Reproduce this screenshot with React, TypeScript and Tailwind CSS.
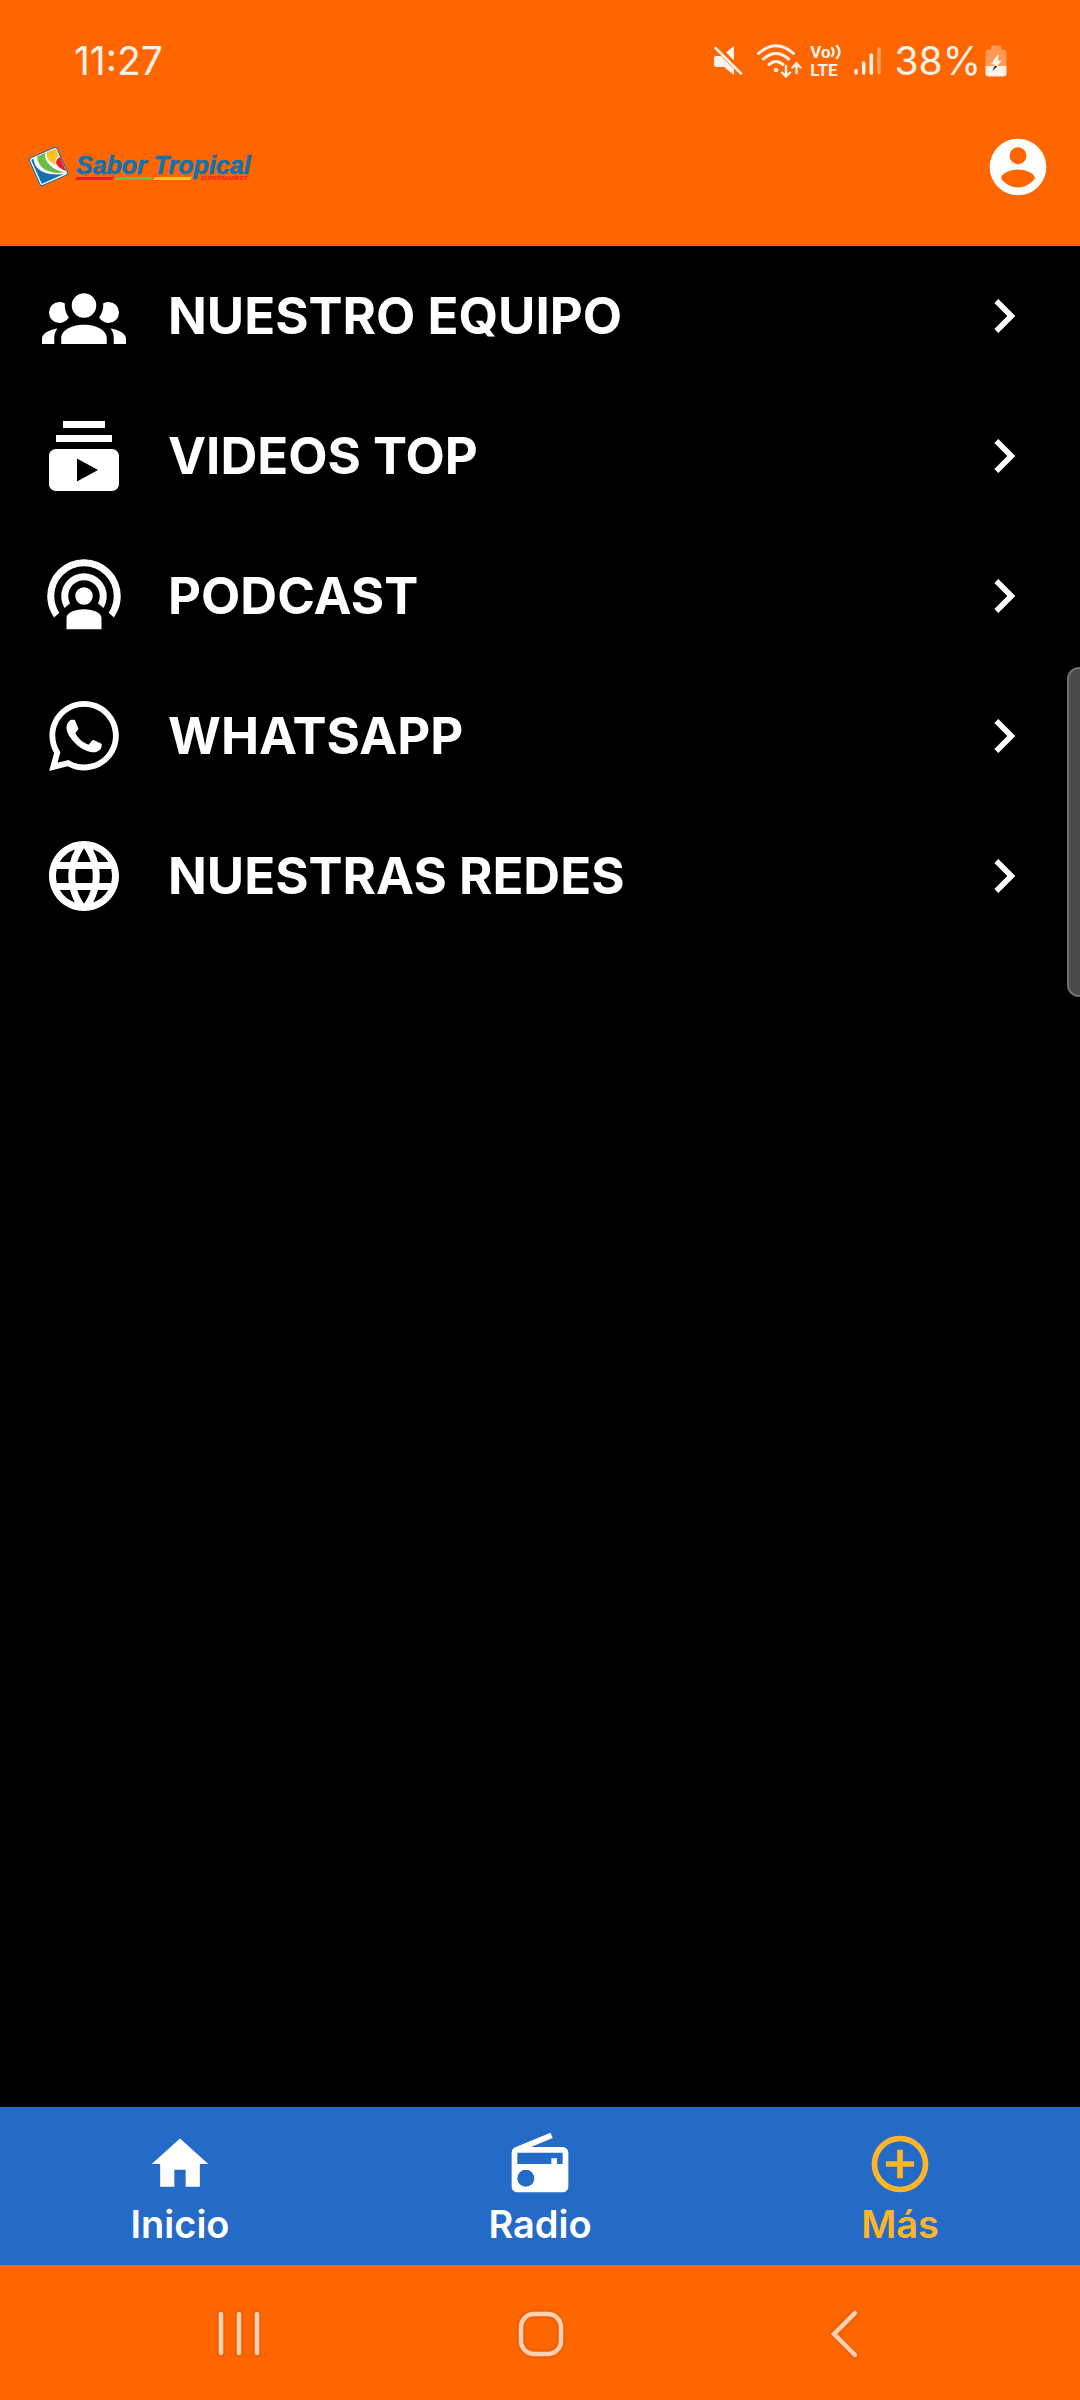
import type { ReactNode } from 'react'
import { MdChevronRight, MdHome, MdLanguage, MdSubscriptions } from 'react-icons/md'

type IconProps = { className?: string }

const AccountGroupIcon = ({ className }: IconProps) => (
  <svg viewBox="0 0 24 24" fill="currentColor" className={className} aria-hidden="true">
    <path d="M12,5.5A3.5,3.5 0 0,1 15.5,9A3.5,3.5 0 0,1 12,12.5A3.5,3.5 0 0,1 8.5,9A3.5,3.5 0 0,1 12,5.5M5,8C5.56,8 6.08,8.15 6.53,8.42C6.38,9.85 6.8,11.27 7.66,12.38C7.16,13.34 6.16,14 5,14A3,3 0 0,1 2,11A3,3 0 0,1 5,8M19,8A3,3 0 0,1 22,11A3,3 0 0,1 19,14C17.84,14 16.84,13.34 16.34,12.38C17.2,11.27 17.62,9.85 17.47,8.42C17.92,8.15 18.44,8 19,8M5.5,18.25C5.5,16.18 8.41,14.5 12,14.5C15.59,14.5 18.5,16.18 18.5,18.25V20H5.5V18.25M0,20V18.5C0,17.11 1.89,15.94 4.45,15.6C3.86,16.28 3.5,17.22 3.5,18.25V20H0M24,20H20.5V18.25C20.5,17.22 20.14,16.28 19.55,15.6C22.11,15.94 24,17.11 24,18.5V20Z" />
  </svg>
)

const PodcastIcon = ({ className }: IconProps) => (
  <svg viewBox="0 0 24 24" fill="currentColor" className={className} aria-hidden="true">
    <path d="M17,18.25V21.5H7V18.25C7,16.87 9.24,15.75 12,15.75C14.76,15.75 17,16.87 17,18.25M12,5.5A6.5,6.5 0 0,1 18.5,12C18.5,13.25 18.15,14.42 17.54,15.41L16,14.04C16.32,13.43 16.5,12.73 16.5,12C16.5,9.5 14.5,7.5 12,7.5C9.5,7.5 7.5,9.5 7.5,12C7.5,12.73 7.68,13.43 8,14.04L6.46,15.41C5.85,14.42 5.5,13.25 5.5,12A6.5,6.5 0 0,1 12,5.5M12,1.5A10.5,10.5 0 0,1 22.5,12C22.5,14.28 21.77,16.39 20.54,18.11L19.04,16.76C19.96,15.4 20.5,13.76 20.5,12A8.5,8.5 0 0,0 12,3.5A8.5,8.5 0 0,0 3.5,12C3.5,13.76 4.04,15.4 4.96,16.76L3.46,18.11C2.23,16.39 1.5,14.28 1.5,12A10.5,10.5 0 0,1 12,1.5M12,9.5A2.5,2.5 0 0,1 14.5,12A2.5,2.5 0 0,1 12,14.5A2.5,2.5 0 0,1 9.5,12A2.5,2.5 0 0,1 12,9.5Z" />
  </svg>
)

const WhatsappIcon = ({ className }: IconProps) => (
  <svg viewBox="0 0 24 24" fill="currentColor" className={className} aria-hidden="true">
    <path d="M12.04 2C6.58 2 2.13 6.45 2.13 11.91C2.13 13.66 2.59 15.36 3.45 16.86L2.05 22L7.3 20.62C8.75 21.41 10.38 21.83 12.04 21.83C17.5 21.83 21.95 17.38 21.95 11.92C21.95 9.27 20.92 6.78 19.05 4.91C17.18 3.03 14.69 2 12.04 2M12.05 3.67C14.25 3.67 16.31 4.53 17.87 6.09C19.42 7.65 20.28 9.72 20.28 11.92C20.28 16.46 16.58 20.15 12.04 20.15C10.56 20.15 9.11 19.76 7.85 19L7.55 18.83L4.43 19.65L5.26 16.61L5.06 16.29C4.24 15 3.8 13.47 3.8 11.91C3.81 7.37 7.5 3.67 12.05 3.67M8.53 7.33C8.37 7.33 8.1 7.39 7.87 7.64C7.65 7.89 7 8.5 7 9.71C7 10.93 7.89 12.1 8 12.27C8.14 12.44 9.76 14.94 12.25 16C12.84 16.27 13.3 16.42 13.66 16.53C14.25 16.72 14.79 16.69 15.22 16.63C15.7 16.56 16.68 16.03 16.89 15.45C17.1 14.87 17.1 14.38 17.04 14.27C16.97 14.17 16.81 14.11 16.56 14C16.31 13.86 15.09 13.26 14.87 13.18C14.64 13.1 14.5 13.06 14.31 13.3C14.15 13.55 13.67 14.11 13.53 14.27C13.38 14.44 13.24 14.46 13 14.34C12.74 14.21 11.94 13.95 11 13.11C10.26 12.45 9.77 11.64 9.62 11.39C9.5 11.15 9.61 11 9.73 10.89C9.84 10.78 10 10.6 10.1 10.45C10.23 10.31 10.27 10.2 10.35 10.04C10.43 9.87 10.39 9.73 10.33 9.61C10.27 9.5 9.77 8.26 9.56 7.77C9.36 7.29 9.16 7.35 9 7.34C8.86 7.34 8.7 7.33 8.53 7.33Z" />
  </svg>
)

const AccountCircleIcon = ({ className }: IconProps) => (
  <svg viewBox="0 0 24 24" fill="currentColor" className={className} aria-hidden="true">
    <path d="M12,19.2C9.5,19.2 7.29,17.92 6,16C6.03,14 10,12.9 12,12.9C14,12.9 17.97,14 18,16C16.71,17.92 14.5,19.2 12,19.2M12,5A3,3 0 0,1 15,8A3,3 0 0,1 12,11A3,3 0 0,1 9,8A3,3 0 0,1 12,5M12,2A10,10 0 0,0 2,12A10,10 0 0,0 12,22A10,10 0 0,0 22,12C22,6.47 17.5,2 12,2Z" />
  </svg>
)

const RadioIcon = ({ className }: IconProps) => (
  <svg viewBox="0 0 24 24" fill="currentColor" className={className} aria-hidden="true">
    <path d="M20,6A2,2 0 0,1 22,8V20A2,2 0 0,1 20,22H4A2,2 0 0,1 2,20V8C2,7.15 2.53,6.42 3.28,6.13L15.71,1L16.47,2.83L8.83,6H20M20,8H4V12H16V10H18V12H20V8M7,14A3,3 0 0,0 4,17A3,3 0 0,0 7,20A3,3 0 0,0 10,17A3,3 0 0,0 7,14Z" />
  </svg>
)

const PlusCircleIcon = ({ className }: IconProps) => (
  <svg viewBox="0 0 24 24" fill="none" stroke="currentColor" strokeWidth="2" className={className} aria-hidden="true">
    <circle cx="12" cy="12" r="9" />
    <path d="M12 7v10M7 12h10" />
  </svg>
)

const Logo = () => (
  <svg viewBox="0 0 228 44" className="h-11 w-[228px]" role="img" aria-label="Sabor Tropical Supermarket">
    <g transform="translate(20.5 21.5) rotate(-24)">
      <rect x="-15.5" y="-15.5" width="31" height="31" rx="2.5" fill="#1272ad" />
      <rect x="-14.5" y="-14.5" width="29" height="29" rx="2" fill="#fff" />
      <rect x="-13.2" y="-13.2" width="26.400" height="26.400" rx="1" fill="#1272ad" />
    </g>
    <path d="M5.500 13.500L28 4L38.500 28.500C24 31 7 29 5.500 13.500Z" fill="#fff" />
    <path d="M9 11.500L17 8C16 17 24 24 36 27.500C22 29.500 10 24 9 11.500Z" fill="#6cbd45" />
    <path d="M19 7.200L27.500 3.800L31 11C28 12.500 26.500 15 27.500 19.500C21 17 17.500 12.500 19 7.200Z" fill="#ffc222" />
    <path d="M32 12L38 26C34 24.500 29.500 22 28 18C28 15 29.500 13 32 12Z" fill="#ec1c24" />
    <text
      x="48"
      y="29"
      fontSize="25"
      fontWeight="700"
      fontStyle="italic"
      fill="#1272ad"
      stroke="#1272ad"
      strokeWidth="0.600"
      className="font-['Liberation_Sans',sans-serif]"
    >
      Sabor Tropical
    </text>
    <path d="M49 32H86L84 35H47Z" fill="#ec1c24" />
    <path d="M88 32H125L123 35H86Z" fill="#6cbd45" />
    <path d="M127 32H164L162 35H125Z" fill="#ffc222" />
    <text x="173" y="35" fontSize="6" fontWeight="700" fontStyle="italic" fill="#ec1c24" className="font-['Liberation_Sans',sans-serif]">
      SUPERMARKET
    </text>
  </svg>
)

const MuteIcon = () => (
  <svg viewBox="0 0 32 32" className="size-8" aria-hidden="true">
    <path d="M2 13Q2 11 4 11H9L22 24V30L12 22H4Q2 22 2 20ZM14 7.500L22 1V15.500Z" fill="#fff2ea" />
    <path d="M3.500 3L29 28.500" stroke="#fff2ea" strokeWidth="2.500" strokeLinecap="round" />
  </svg>
)

const WifiIcon = () => (
  <svg viewBox="0 0 46 34" className="h-[34px] w-[46px]" fill="none" stroke="#fff2ea" strokeWidth="3" strokeLinecap="round" aria-hidden="true">
    <path d="M2.500 9.500Q20 -6 37.500 9.500M7.500 15Q20 4 32.500 15M13 20.500Q20 14.500 27 20.500" />
    <circle cx="20" cy="26" r="2.300" fill="#fff2ea" stroke="none" />
    <path d="M30 22V32M26 28.500L30 32.500L34 28.500M40.500 29V19.500M36.500 23.500L40.500 19.500L44.500 23.500" strokeWidth="2.400" />
  </svg>
)

const VolteIcon = () => (
  <div className="flex flex-col font-['Roboto',sans-serif] text-[17px] leading-[18px] font-bold">
    <div className="flex items-center">
      <span>Vo</span>
      <svg viewBox="0 0 12 16" className="h-4 w-3" fill="none" stroke="currentColor" strokeWidth="2.400" strokeLinecap="round" aria-hidden="true">
        <path d="M2 4Q5 8 2 12M7 2Q12 8 7 14" />
      </svg>
    </div>
    <span>LTE</span>
  </div>
)

const SignalIcon = () => (
  <svg viewBox="0 0 28 30" className="h-[30px] w-7" stroke="#fff2ea" strokeWidth="3.500" strokeLinecap="round" aria-hidden="true">
    <path d="M2 24.500V27M9.700 17V27M17.300 9V27" />
    <path d="M25 3V27" opacity="0.400" />
  </svg>
)

const BatteryIcon = () => (
  <svg viewBox="0 0 22 32" className="h-8 w-[22px]" aria-hidden="true">
    <path d="M6 4.500V2Q6 0.500 7.500 0.500H14.500Q16 0.500 16 2V4.500H18.500Q21.500 4.500 21.500 7.500V21H0.500V7.500Q0.500 4.500 3.500 4.500Z" fill="#ff9955" />
    <path d="M0.500 21H21.500V28.500Q21.500 31.500 18.500 31.500H3.500Q0.500 31.500 0.500 28.500Z" fill="#fff2ea" />
    <path d="M12.500 10L5.500 19.500H10L9.500 21H12.500L17 15.500H12.500L14 10Z" fill="#fff2ea" />
    <path d="M9.500 21H12.500L7.500 26Z" fill="#222" />
  </svg>
)

const menuItems: { label: string; icon: ReactNode }[] = [
  { label: 'NUESTRO EQUIPO', icon: <AccountGroupIcon className="size-[84px]" /> },
  { label: 'VIDEOS TOP', icon: <MdSubscriptions className="size-[84px]" /> },
  { label: 'PODCAST', icon: <PodcastIcon className="size-[84px]" /> },
  { label: 'WHATSAPP', icon: <WhatsappIcon className="size-[84px]" /> },
  { label: 'NUESTRAS REDES', icon: <MdLanguage className="size-[84px]" /> }
]

const tabs = [
  { label: 'Inicio', icon: <MdHome className="size-[68px]" />, color: 'text-white' },
  { label: 'Radio', icon: <RadioIcon className="size-[68px]" />, color: 'text-white' },
  { label: 'Más', icon: <PlusCircleIcon className="size-[68px]" />, color: 'text-[#ffb52a]' }
]

const StatusBar = () => (
  <div className="flex h-[122px] items-center justify-between pr-[73px] pl-[74px] font-['Inter',sans-serif] text-[39px] text-[#fff2ea]">
    <span>11:27</span>
    <div className="flex items-center">
      <MuteIcon />
      <div className="ml-3">
        <WifiIcon />
      </div>
      <div className="ml-2">
        <VolteIcon />
      </div>
      <div className="ml-3">
        <SignalIcon />
      </div>
      <span className="ml-3">38%</span>
      <div className="ml-1">
        <BatteryIcon />
      </div>
    </div>
  </div>
)

const Header = () => (
  <header className="bg-[#ff6600]">
    <StatusBar />
    <div className="flex h-[124px] items-start justify-between px-7 pt-[11px]">
      <a href="#" className="mt-3">
        <Logo />
      </a>
      <button type="button" aria-label="Cuenta" className="text-white">
        <AccountCircleIcon className="size-[68px]" />
      </button>
    </div>
  </header>
)

const SystemNav = () => (
  <div className="grid h-[135px] grid-cols-3 items-center justify-items-center bg-[#ff6600] px-[86px]">
    <button type="button" aria-label="Recientes">
      <svg viewBox="0 0 56 56" className="size-14" fill="none" strokeLinecap="round" aria-hidden="true">
        <path d="M12 9V48M30 9V48M48 9V48" stroke="#f06000" strokeWidth="9" />
        <path d="M12 9V48M30 9V48M48 9V48" stroke="#ffd0b2" strokeWidth="4.500" />
      </svg>
    </button>
    <button type="button" aria-label="Inicio del sistema">
      <svg viewBox="0 0 56 56" className="size-14" fill="none" aria-hidden="true">
        <rect x="9" y="9" width="40" height="40" rx="13" stroke="#f06000" strokeWidth="9" />
        <rect x="9" y="9" width="40" height="40" rx="13" stroke="#ffd0b2" strokeWidth="4.500" />
      </svg>
    </button>
    <button type="button" aria-label="Atrás">
      <svg viewBox="0 0 56 56" className="size-14" fill="none" strokeLinecap="round" aria-hidden="true">
        <path d="M40 8L19 29L40 50" stroke="#f06000" strokeWidth="9" />
        <path d="M40 8L19 29L40 50" stroke="#ffd0b2" strokeWidth="4.500" />
      </svg>
    </button>
  </div>
)

export default function App() {
  return (
    <div className="relative flex min-h-screen flex-col bg-black font-['Inter',sans-serif] text-white">
      <Header />
      <main className="flex-1">
        <ul>
          {menuItems.map(({ label, icon }) => (
            <li key={label}>
              <a href="#" className="flex h-[140px] items-center px-[42px]">
                {icon}
                <span className="ml-[42px] flex-1 text-[51px] font-bold">{label}</span>
                <MdChevronRight className="size-[68px]" />
              </a>
            </li>
          ))}
        </ul>
      </main>
      <nav className="grid h-[158px] grid-cols-3 bg-[#246bc8]">
        {tabs.map(({ label, icon, color }) => (
          <a key={label} href="#" className={`flex flex-col items-center pt-[23px] ${color}`}>
            {icon}
            <span className="text-[38px] leading-[52px] font-semibold">{label}</span>
          </a>
        ))}
      </nav>
      <SystemNav />
      {/* edge panel handle */}
      <div className="absolute top-[667px] right-0 h-[330px] w-[13px] rounded-l-xl border-2 border-r-0 border-[#707070] bg-[#4a4a4a]" />
    </div>
  )
}
